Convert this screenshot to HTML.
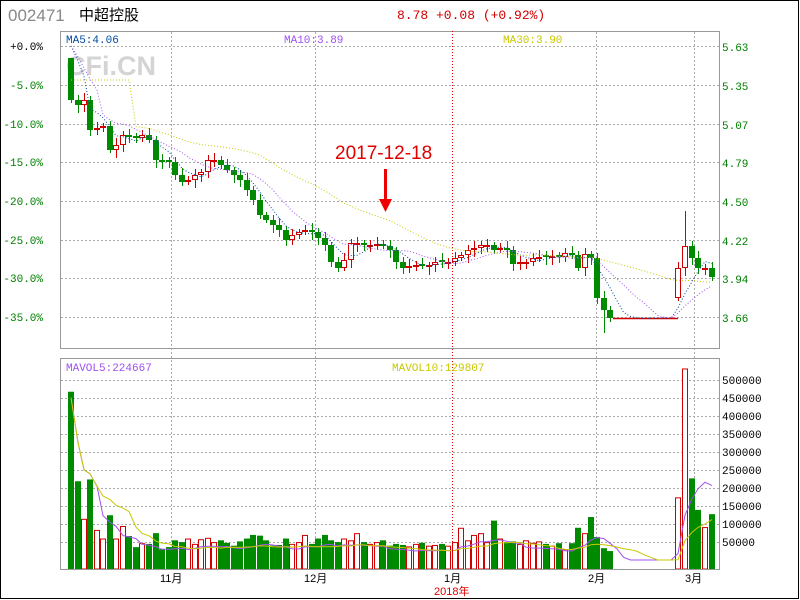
<!DOCTYPE html>
<html><head><meta charset="utf-8"><style>
html,body{margin:0;padding:0;background:#fff;width:800px;height:600px;overflow:hidden}
svg{display:block}
text{font-family:"Liberation Mono","Noto Sans CJK SC",monospace}
</style></head><body>
<svg id="s" width="800" height="600" xmlns="http://www.w3.org/2000/svg">
<rect x="0.5" y="0.5" width="798" height="598" fill="#fff" stroke="#000"/>
<text x="8" y="21" style="font-family:'Liberation Sans',sans-serif" font-size="17" fill="#888">002471</text>
<text x="79" y="20" style="font-family:'Liberation Sans','Noto Sans CJK SC',sans-serif" font-size="15" fill="#000">中超控股</text>
<text x="397" y="19" font-size="13" fill="#d00000">8.78 +0.08 (+0.92%)</text>
<g id="grid"></g>
<text x="66" y="75" style="font-family:'Liberation Sans',sans-serif" font-size="27" font-weight="bold" fill="#d4d4d4">CFi.CN</text>
<g id="g"></g>
<rect x="60.5" y="31.5" width="659" height="317" fill="none" stroke="#999"/>
<rect x="60.5" y="358.5" width="659" height="211" fill="none" stroke="#999"/>
<line x1="452.5" y1="31" x2="452.5" y2="569" stroke="#e00" stroke-dasharray="1,2"/>
<text x="66" y="43" font-size="11" fill="#004a9f">MA5:4.06</text>
<text x="284" y="43" font-size="11" fill="#a050f0">MA10:3.89</text>
<text x="503" y="43" font-size="11" fill="#c8c800">MA30:3.90</text>
<text x="66" y="371" font-size="11" fill="#a050f0">MAVOL5:224667</text>
<text x="392" y="371" font-size="11" fill="#c8c800">MAVOL10:129807</text>
<text x="335" y="159" style="font-family:'Liberation Sans',sans-serif" font-size="19" fill="#e00000">2017-12-18</text>
<rect x="384" y="169" width="3" height="32" fill="#e00"/>
<polygon points="379,199 392,199 385.5,212" fill="#e00"/>
<text x="160" y="582" font-size="11" fill="#000" style="font-family:'Liberation Sans','Noto Sans CJK SC',sans-serif">11月</text>
<text x="304" y="582" font-size="11" fill="#000" style="font-family:'Liberation Sans','Noto Sans CJK SC',sans-serif">12月</text>
<text x="444" y="582" font-size="11" fill="#000" style="font-family:'Liberation Sans','Noto Sans CJK SC',sans-serif">1月</text>
<text x="588" y="582" font-size="11" fill="#000" style="font-family:'Liberation Sans','Noto Sans CJK SC',sans-serif">2月</text>
<text x="685" y="582" font-size="11" fill="#000" style="font-family:'Liberation Sans','Noto Sans CJK SC',sans-serif">3月</text>
<text x="434" y="595" font-size="11" fill="#e00000" style="font-family:'Liberation Sans','Noto Sans CJK SC',sans-serif">2018年</text>
</svg>
<script>
var NS="http://www.w3.org/2000/svg",G=document.getElementById('g'),GR=document.getElementById('grid'),S=document.getElementById('s');
function el(p,t,a,txt){var e=document.createElementNS(NS,t);for(var k in a)e.setAttribute(k,a[k]);if(txt)e.textContent=txt;p.appendChild(e);return e;}
var hy=[46,85,124,162,201,240,278,317];
var lp=["+0.0%","-5.0%","-10.0%","-15.0%","-20.0%","-25.0%","-30.0%","-35.0%"];
var rp=["5.63","5.35","5.07","4.79","4.50","4.22","3.94","3.66"];
hy.forEach(function(y,i){el(GR,'line',{x1:61,x2:719,y1:y+.5,y2:y+.5,stroke:'#aaa','stroke-dasharray':'2,2'});
el(S,'text',{x:43,y:y+4,'font-size':11,fill:i?'#008000':'#000','text-anchor':'end'},lp[i]);
el(S,'text',{x:722,y:y+5,'font-size':11,fill:'#008000'},rp[i]);});
[171,315,596,694].forEach(function(x){el(GR,'line',{x1:x+.5,x2:x+.5,y1:32,y2:569,stroke:'#aaa','stroke-dasharray':'2,2'});});
var vl=["500000","450000","400000","350000","300000","250000","200000","150000","100000","50000"];
vl.forEach(function(t,i){var y=380+i*18;el(GR,'line',{x1:61,x2:719,y1:y+.5,y2:y+.5,stroke:'#aaa','stroke-dasharray':'2,2'});
el(S,'text',{x:722,y:y+4,'font-size':11,fill:'#000'},t);});
var d=[[71,100],[78,105],[84,100],[90,130],[97,128],[103,126],[110,150],[116,145],[123,135],[129,137],[136,138],[142,135],[149,140],[156,160],[162,162],[169,162],[175,175],[182,182],[188,180],[195,175],[201,172],[208,160],[214,160],[221,165],[227,170],[234,175],[240,180],[247,190],[253,200],[260,215],[266,220],[273,225],[279,230],[286,240],[292,235],[299,232],[305,230],[312,232],[318,238],[325,245],[331,262],[338,268],[344,260],[351,243],[357,243],[364,245],[370,245],[377,244],[383,246],[390,250],[396,262],[403,268],[409,266],[416,265],[422,266],[429,265],[435,262],[442,262],[448,262],[455,258],[461,255],[468,250],[474,248],[481,245],[487,245],[494,250],[500,248],[507,250],[513,264],[520,262],[526,262],[533,258],[539,257],[546,257],[552,256],[559,257],[565,253],[572,255],[578,268],[585,254],[591,258],[597,298],[604,310],[610,318],[678,268],[685,246],[692,258],[698,268],[705,268],[712,277]];
var Vpre=[470,220,115,225,84,60,125,60,95,67,36,47,45,75,30,36,55,50,60,45,58,62,50,55,48,40,52,60,70,68,55,40,42,60,45,50,70,45,60,70,55,50,60,55,75,50,45,50,55,40,45,42,38,45,48,40,42,45,40,50,90,55,70,75,50,110,60,50,52,45,55,48,52,45,40,47,30,47,90,75,120,64,33,25];
var Vpost=[175,535,228,140,92,128];
var prev=90,cl=[],xs=[],vv=[],pi=0,qi=0;
d.forEach(function(c,i){var x=c[0],o=prev,cy=c[1];if(i==0)o=58;if(x==678)o=298;
var vol=x<678?(Vpre[pi++]||40):Vpost[qi++];
var up=cy<o-0.5||(Math.abs(cy-o)<=0.5&&i%2==0);
if(Math.abs(cy-o)<2){o=cy+(up?2:-2);}
var top=Math.min(o,cy),bot=Math.max(o,cy);
var hi=top-3-(i*7%5),lo=bot+3+(i*5%6);
if(x==685){hi=211;} if(x==604){lo=333;} if(i==0)hi=58;
var col=up?'#d00000':'#008a00';
el(G,'line',{x1:x+.5,x2:x+.5,y1:hi,y2:lo,stroke:col});
if(up)el(G,'rect',{x:x-2.5,y:top+.5,width:5,height:Math.max(1,bot-top-1),fill:'#fff',stroke:col});
else el(G,'rect',{x:x-3,y:top,width:6,height:Math.max(2,bot-top),fill:col});
var vy=560-vol*0.358;
if(up)el(G,'rect',{x:x-2.5,y:vy+.5,width:5,height:568.5-vy,fill:'#fff',stroke:col});
else el(G,'rect',{x:x-3,y:vy,width:6,height:569-vy,fill:col});
prev=cy;cl.push(cy);xs.push(x);vv.push(vol);
if(x==610){for(var k=1;k<=9;k++){cl.push(318);xs.push(610+k*6.8);vv.push(0);}}
});
el(G,'line',{x1:613,x2:678,y1:318.5,y2:318.5,stroke:'#d00000','stroke-width':1.5});
function ma(a,n){return a.map(function(v,i){var s=0,k=0;for(var j=Math.max(0,i-n+1);j<=i;j++){s+=a[j];k++;}return s/k;});}
function line(arr,col,dash){var p=arr.map(function(v,i){return xs[i]+','+v.toFixed(1)});el(G,'polyline',{points:p.join(' '),fill:'none',stroke:col,'stroke-dasharray':dash,'stroke-width':1});}
line(ma(cl,5).map(function(v,i){return i<3?46+i*15:v}),'#004a9f','1,2');
line(ma(cl,10).map(function(v,i){return i<5?46+i*11:v}),'#a050f0','1,2');
line(ma(cl,30).map(function(v,i){return i<10?Math.min(v,80):v}),'#c8c800','1,2');
line(ma(vv,5).map(function(v){return Math.min(560,566-v*0.358)}),'#a050f0','');
line(ma(vv,10).map(function(v){return Math.min(560,566-v*0.358)}),'#c8c800','');
</script>
</body></html>
